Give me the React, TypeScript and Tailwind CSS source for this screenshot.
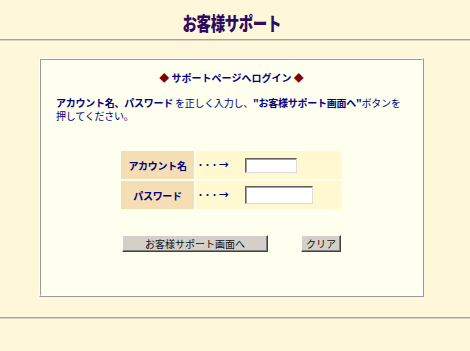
import React from 'react';

const jp = { fontFamily: '"Noto Sans CJK JP", "Noto Sans", sans-serif' };

const Field = ({ label, inputWidth, inputHeight }: { label: string; inputWidth: string; inputHeight: string }) => (
  <div className="flex gap-[2px]">
    <div className="w-[73px] h-[28px] bg-[#F5DEB3] flex items-center justify-center text-[10px] font-bold text-[#000080] tracking-[-0.3px]">
      {label}
    </div>
    <div className="w-[146px] h-[28px] bg-[#FFF8D0] flex items-center">
      <span className="ml-[2px] w-[30px] text-[10px] font-bold text-[#000080] leading-none whitespace-nowrap">
        <span className="tracking-[2px]">･･･</span>→
      </span>
      <input
        className={`ml-[17px] ${inputWidth} ${inputHeight} bg-white border border-t-[#606060] border-l-[#606060] border-r-[#dcdcdc] border-b-[#dcdcdc] shadow-[inset_1px_1px_0_#a0a0a0] outline-none`}
      />
    </div>
  </div>
);

const Btn = ({ children, className }: { children: React.ReactNode; className: string }) => (
  <button
    className={`${className} h-[17px] bg-[#D4D0C8] border border-t-white border-l-white border-r-[#404040] border-b-[#404040] shadow-[inset_-1px_-1px_0_#808080] text-[10px] text-[#111] leading-none flex items-center justify-center`}
  >
    {children}
  </button>
);

export default function App() {
  return (
    <div className="min-h-[351px] bg-[#FFF7DA]" style={jp}>
      <div className="w-[463px]">
        {/* Header */}
        <div className="h-[39px] flex items-center justify-center pt-[5px]">
          <h1 className="inline-block scale-x-[0.76] text-[19px] font-black text-[#2E0A62] leading-none tracking-[-0.5px]">
            お客様サポート
          </h1>
        </div>
      </div>
      <div className="h-[2px] border-t border-t-[#A4A4A4] border-b border-b-[#D6D2C4]" />

      <div className="w-[463px]">
        {/* Login panel */}
        <div className="mt-[17px] ml-[39px] w-[385px] h-[239px] border border-t-white border-l-white border-r-[#9A9A9A] border-b-[#9A9A9A]">
          <div className="h-full bg-[#FFFFF0] border border-t-[#9A9A9A] border-l-[#9A9A9A] border-r-white border-b-white">
            <div className="pt-[12px] text-center text-[10px] leading-[12px] font-bold text-[#000080]">
              <span className="text-[#800000]">◆</span> サポートページへログイン <span className="text-[#800000]">◆</span>
            </div>

            <p className="mt-[12px] px-[15px] text-[10px] leading-[13px] text-[#000080] tracking-[-0.25px]">
              <b>アカウント名、パスワード</b> を正しく入力し、<b>"お客様サポート画面へ"</b>ボタンを
              <br />
              押してください。
            </p>

            <div className="mt-[29px] flex flex-col items-center gap-[2px]">
              <Field label="アカウント名" inputWidth="w-[52px]" inputHeight="h-[15px]" />
              <Field label="パスワード" inputWidth="w-[68px]" inputHeight="h-[18px]" />
            </div>

            <div className="mt-[26px] flex justify-center gap-[33px]">
              <Btn className="w-[146px]">お客様サポート画面へ</Btn>
              <Btn className="w-[40px]">クリア</Btn>
            </div>
          </div>
        </div>
      </div>

      <div className="mt-[20px] h-[2px] border-t border-t-[#A4A4A4] border-b border-b-[#D6D2C4]" />
    </div>
  );
}
